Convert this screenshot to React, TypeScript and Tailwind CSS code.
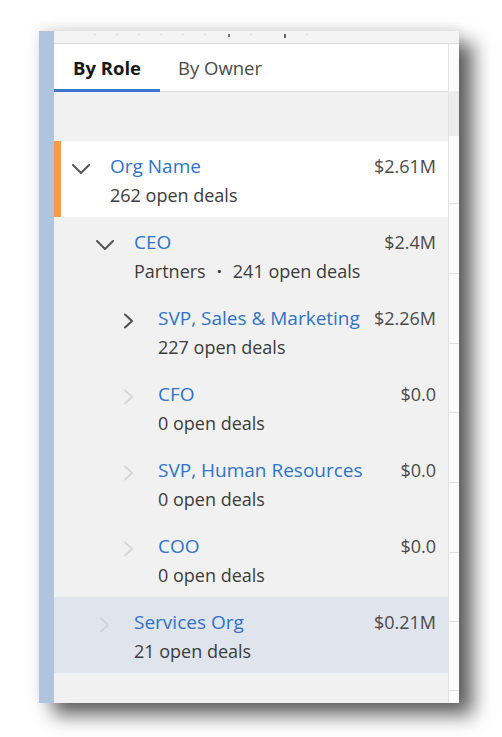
import React from "react";

type Row = {
  level: number;
  name: string;
  sub: React.ReactNode;
  amount: string;
  icon: "down" | "right" | "leaf";
  tone?: "active" | "selected";
};

const rows: Row[] = [
  { level: 0, name: "Org Name", sub: "262 open deals", amount: "$2.61M", icon: "down", tone: "active" },
  {
    level: 1,
    name: "CEO",
    sub: (
      <>
        Partners<span className="mx-[11px] font-bold">·</span>241 open deals
      </>
    ),
    amount: "$2.4M",
    icon: "down",
  },
  { level: 2, name: "SVP, Sales & Marketing", sub: "227 open deals", amount: "$2.26M", icon: "right" },
  { level: 2, name: "CFO", sub: "0 open deals", amount: "$0.0", icon: "leaf" },
  { level: 2, name: "SVP, Human Resources", sub: "0 open deals", amount: "$0.0", icon: "leaf" },
  { level: 2, name: "COO", sub: "0 open deals", amount: "$0.0", icon: "leaf" },
  { level: 1, name: "Services Org", sub: "21 open deals", amount: "$0.21M", icon: "leaf", tone: "selected" },
];

function Chevron({ icon, selected }: { icon: Row["icon"]; selected?: boolean }) {
  if (icon === "down") {
    return (
      <svg width="18" height="10" viewBox="0 0 18 10" fill="none">
        <path d="M1 1 L9 9 L17 1" stroke="#555555" strokeWidth="2" strokeLinecap="round" strokeLinejoin="round" />
      </svg>
    );
  }
  // right chevron: dark when it has children, faded for leaf nodes
  const color = icon === "right" ? "#4f4f4f" : selected ? "#cfd4dc" : "#d6d6d6";
  return (
    <svg width="11" height="16" viewBox="0 0 11 16" fill="none">
      <path d="M2 1.5 L9 8 L2 14.5" stroke={color} strokeWidth="2" strokeLinecap="round" strokeLinejoin="round" />
    </svg>
  );
}

function TreeRow({ row }: { row: Row }) {
  const bg =
    row.tone === "active"
      ? "bg-white shadow-[inset_7px_0_0_#f39b48]"
      : row.tone === "selected"
      ? "bg-[#dfe4ed]"
      : "";
  const pad = row.level === 0 ? "pl-[14px]" : row.level === 1 ? "pl-[38px]" : "pl-[62px]";

  return (
    <div className={`h-[76px] flex items-start pt-[12px] pr-[12px] ${pad} ${bg}`}>
      <div className="w-[25px] h-[26px] shrink-0 flex items-center justify-center pt-[6px]">
        <Chevron icon={row.icon} selected={row.tone === "selected"} />
      </div>
      <div className="flex-1 min-w-0 ml-[17px]">
        <div className="text-[19px] leading-[26px] text-[#2f73c8] whitespace-nowrap">{row.name}</div>
        <div className="mt-[4px] text-[18px] leading-[24px] text-[#3c3c3c] whitespace-nowrap">{row.sub}</div>
      </div>
      <div className="shrink-0 ml-[8px] mt-[1px] text-[18px] leading-[24px] text-[#4a4a4a]">{row.amount}</div>
    </div>
  );
}

export default function App() {
  return (
    <div className="w-[502px] h-[737px] bg-white pt-[31px] pl-[39px] font-['Open_Sans',sans-serif] overflow-hidden">
      <div className="w-[420px] h-[672px] flex shadow-[14px_12px_18px_rgba(0,0,0,0.62),0_-3px_12px_rgba(0,0,0,0.1)]">
        {/* left blue strip */}
        <div className="w-[15px] shrink-0 bg-[#b1c4dd]" />

        <div className="flex-1 flex flex-col">
          {/* cut-off header strip */}
          <div className="h-[13px] shrink-0 bg-[#f3f3f3] border-b border-[#dcdcdc] flex items-start gap-[20px] pl-[40px] pt-[3px]">
            <span className="w-[2px] h-[1px] bg-[#dadada]" />
            <span className="w-[2px] h-[1px] bg-[#dadada]" />
            <span className="w-[2px] h-[1px] bg-[#e0e0e0]" />
            <span className="w-[2px] h-[1px] bg-[#e0e0e0]" />
            <span className="w-[2px] h-[1px] bg-[#e0e0e0]" />
            <span className="w-[2px] h-[1px] bg-[#e0e0e0]" />
            <span className="w-[2px] h-[3px] bg-[#777777] ml-[2px]" />
            <span className="w-[2px] h-[1px] bg-[#e0e0e0]" />
            <span className="w-[2px] h-[4px] bg-[#666666] ml-[12px]" />
            <span className="w-[2px] h-[1px] bg-[#e0e0e0]" />
          </div>

          <div className="flex-1 flex">
            {/* main panel */}
            <div className="w-[394px] shrink-0 flex flex-col bg-[#f1f1f1]">
              <div className="h-[48px] shrink-0 bg-white border-b border-[#dddddd] flex">
                <div className="w-[106px] flex items-center justify-center border-b-[3px] border-[#3a76cf] -mb-[1px] pt-[2px]">
                  <span className="text-[18.5px] font-bold text-[#16181a]">By Role</span>
                </div>
                <div className="px-[18px] flex items-center pt-[1px]">
                  <span className="text-[18.5px] text-[#4a4a4a]">By Owner</span>
                </div>
              </div>

              <div className="h-[49px] shrink-0" />

              {rows.map((row, i) => (
                <TreeRow key={i} row={row} />
              ))}

              <div className="flex-1" />
            </div>

            {/* partially visible table behind */}
            <div className="flex-1 border-l border-[#e2e2e2] bg-[#fbfbfb] flex flex-col">
              <div className="h-[47px] shrink-0" />
              <div className="h-[45px] shrink-0 bg-[#ececec]" />
              <div className="h-[68px] shrink-0 border-b border-[#e3e3e3]" />
              <div className="h-[70px] shrink-0 border-b border-[#e3e3e3]" />
              <div className="h-[70px] shrink-0 border-b border-[#e3e3e3]" />
              <div className="h-[69px] shrink-0 border-b border-[#e3e3e3]" />
              <div className="h-[70px] shrink-0 border-b border-[#e3e3e3]" />
              <div className="h-[70px] shrink-0 border-b border-[#e3e3e3]" />
              <div className="h-[69px] shrink-0 border-b border-[#e3e3e3]" />
              <div className="h-[69px] shrink-0 border-b border-[#e3e3e3]" />
            </div>
          </div>
        </div>
      </div>
    </div>
  );
}
